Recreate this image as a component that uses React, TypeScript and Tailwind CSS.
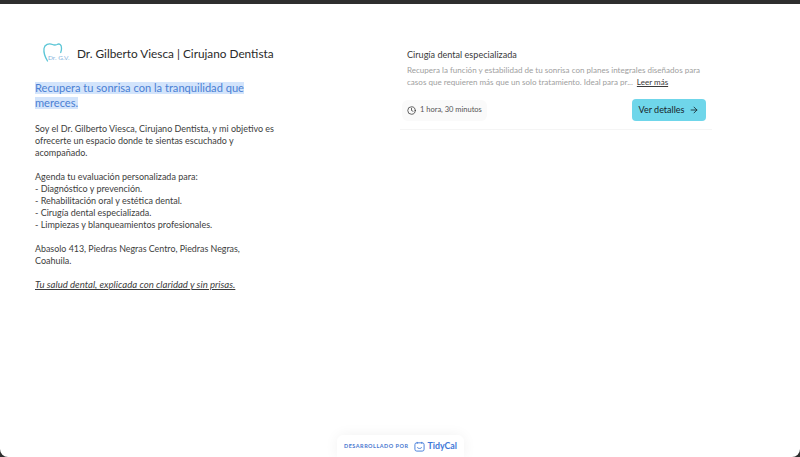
import { ArrowRight, Clock } from "lucide-react";

function Logo() {
  return (
    <div className="relative w-[24px] h-[24px] shrink-0">
      <svg viewBox="0 0 24 24" className="w-full h-full" fill="none">
        <path
          d="M5.5 19C3 15 1.5 10.5 2 6.5C2.5 2.5 7 0.8 10.5 2.5C12 3.2 13.5 3.2 15 2.5C17.5 1.2 19.5 2.5 19.5 6C19.6 7.5 19.3 9 18.7 10.5"
          stroke="#5cc6d6"
          strokeWidth="1.3"
          strokeLinecap="round"
        />
      </svg>
      <span className="absolute left-[6px] top-[12px] text-[6.5px] leading-[7px] whitespace-nowrap text-[#7fb2dc]">
        Dr. G.V.
      </span>
    </div>
  );
}

export default function App() {
  return (
    <div className="h-screen bg-[#2e2e2e] pt-1 overflow-hidden font-['Lato',sans-serif]">
      <div className="relative h-full bg-white rounded-b-lg flex pl-[35px] pt-[38px]">
        <div className="w-[245px] shrink-0">
          <div className="flex items-center gap-[11px] pl-[7px] h-6">
            <Logo />
            <h1 className="text-[11.8px] text-[#2a2a2a] whitespace-nowrap">Dr. Gilberto Viesca | Cirujano Dentista</h1>
          </div>

          <div className="mt-[16px] flex flex-col items-start gap-[3px] text-[11.1px] leading-[12px] text-[#4a80d4] whitespace-nowrap">
            <span className="bg-[#d3e4fb]">Recupera tu sonrisa con la tranquilidad que</span>
            <span className="bg-[#d3e4fb]">mereces.</span>
          </div>

          <div className="mt-[14px] text-[9px] leading-[12px] text-[#3d3d3d] whitespace-nowrap">
            <p>Soy el Dr. Gilberto Viesca, Cirujano Dentista, y mi objetivo es</p>
            <p>ofrecerte un espacio donde te sientas escuchado y</p>
            <p>acompañado.</p>
            <p className="mt-[12px]">Agenda tu evaluación personalizada para:</p>
            <p>- Diagnóstico y prevención.</p>
            <p>- Rehabilitación oral y estética dental.</p>
            <p>- Cirugía dental especializada.</p>
            <p>- Limpiezas y blanqueamientos profesionales.</p>
            <p className="mt-[12px] text-[8.9px]">Abasolo 413, Piedras Negras Centro, Piedras Negras,</p>
            <p>Coahuila.</p>
            <p className="mt-[12px] text-[9.6px] italic underline">Tu salud dental, explicada con claridad y sin prisas.</p>
          </div>
        </div>

        <div className="ml-[120px] w-[312px] h-[88px] pt-[6px] border-b border-[#f5f5f5]">
          <div className="pl-[7px] pr-[6px]">
            <h2 className="text-[9.1px] leading-[13px] text-[#3a3a3a]">Cirugía dental especializada</h2>
            <p className="mt-[3px] text-[8.06px] leading-[12px] text-[#a0a0a0] whitespace-nowrap">
              Recupera la función y estabilidad de tu sonrisa con planes integrales diseñados para
              <br />
              casos que requieren más que un solo tratamiento. Ideal para pr...
              <span className="ml-[4px] text-[#3a3a3a] underline">Leer más</span>
            </p>
            <div className="mt-[11px] flex items-center justify-between">
              <div className="-ml-[5px] h-[21px] px-[5px] rounded-md bg-[#fafafa] flex items-center gap-[4px] text-[7.5px] text-[#555]">
                <Clock className="size-[9px] text-[#333]" />
                1 hora, 30 minutos
              </div>
              <button className="w-[74px] h-[22px] rounded bg-[#6fd6ea] flex items-center justify-center gap-[5px] text-[9px] text-[#17252b]">
                Ver detalles
                <ArrowRight className="size-[10px]" />
              </button>
            </div>
          </div>
        </div>

        <div className="absolute left-[337px] bottom-0 w-[127px] h-[22px] bg-white rounded-t-md shadow-[0_0_14px_rgba(0,0,0,0.06)] flex items-center pl-[7px]">
          <span className="text-[5.5px] tracking-[0.5px] font-bold text-[#4a78cf] whitespace-nowrap">DESARROLLADO POR</span>
          <svg viewBox="0 0 12 12" className="ml-[6px] w-[11px] h-[11px]" fill="none" stroke="#3f78d8" strokeWidth="1">
            <rect x="1" y="2" width="10" height="9" rx="2" />
            <path d="M3.5 1V3M8.5 1V3M3.5 7C4.5 8.5 7.5 8.5 8.5 7" />
          </svg>
          <span className="ml-[2px] text-[8.8px] font-bold text-[#3f78d8] whitespace-nowrap">TidyCal</span>
        </div>
      </div>
    </div>
  );
}
